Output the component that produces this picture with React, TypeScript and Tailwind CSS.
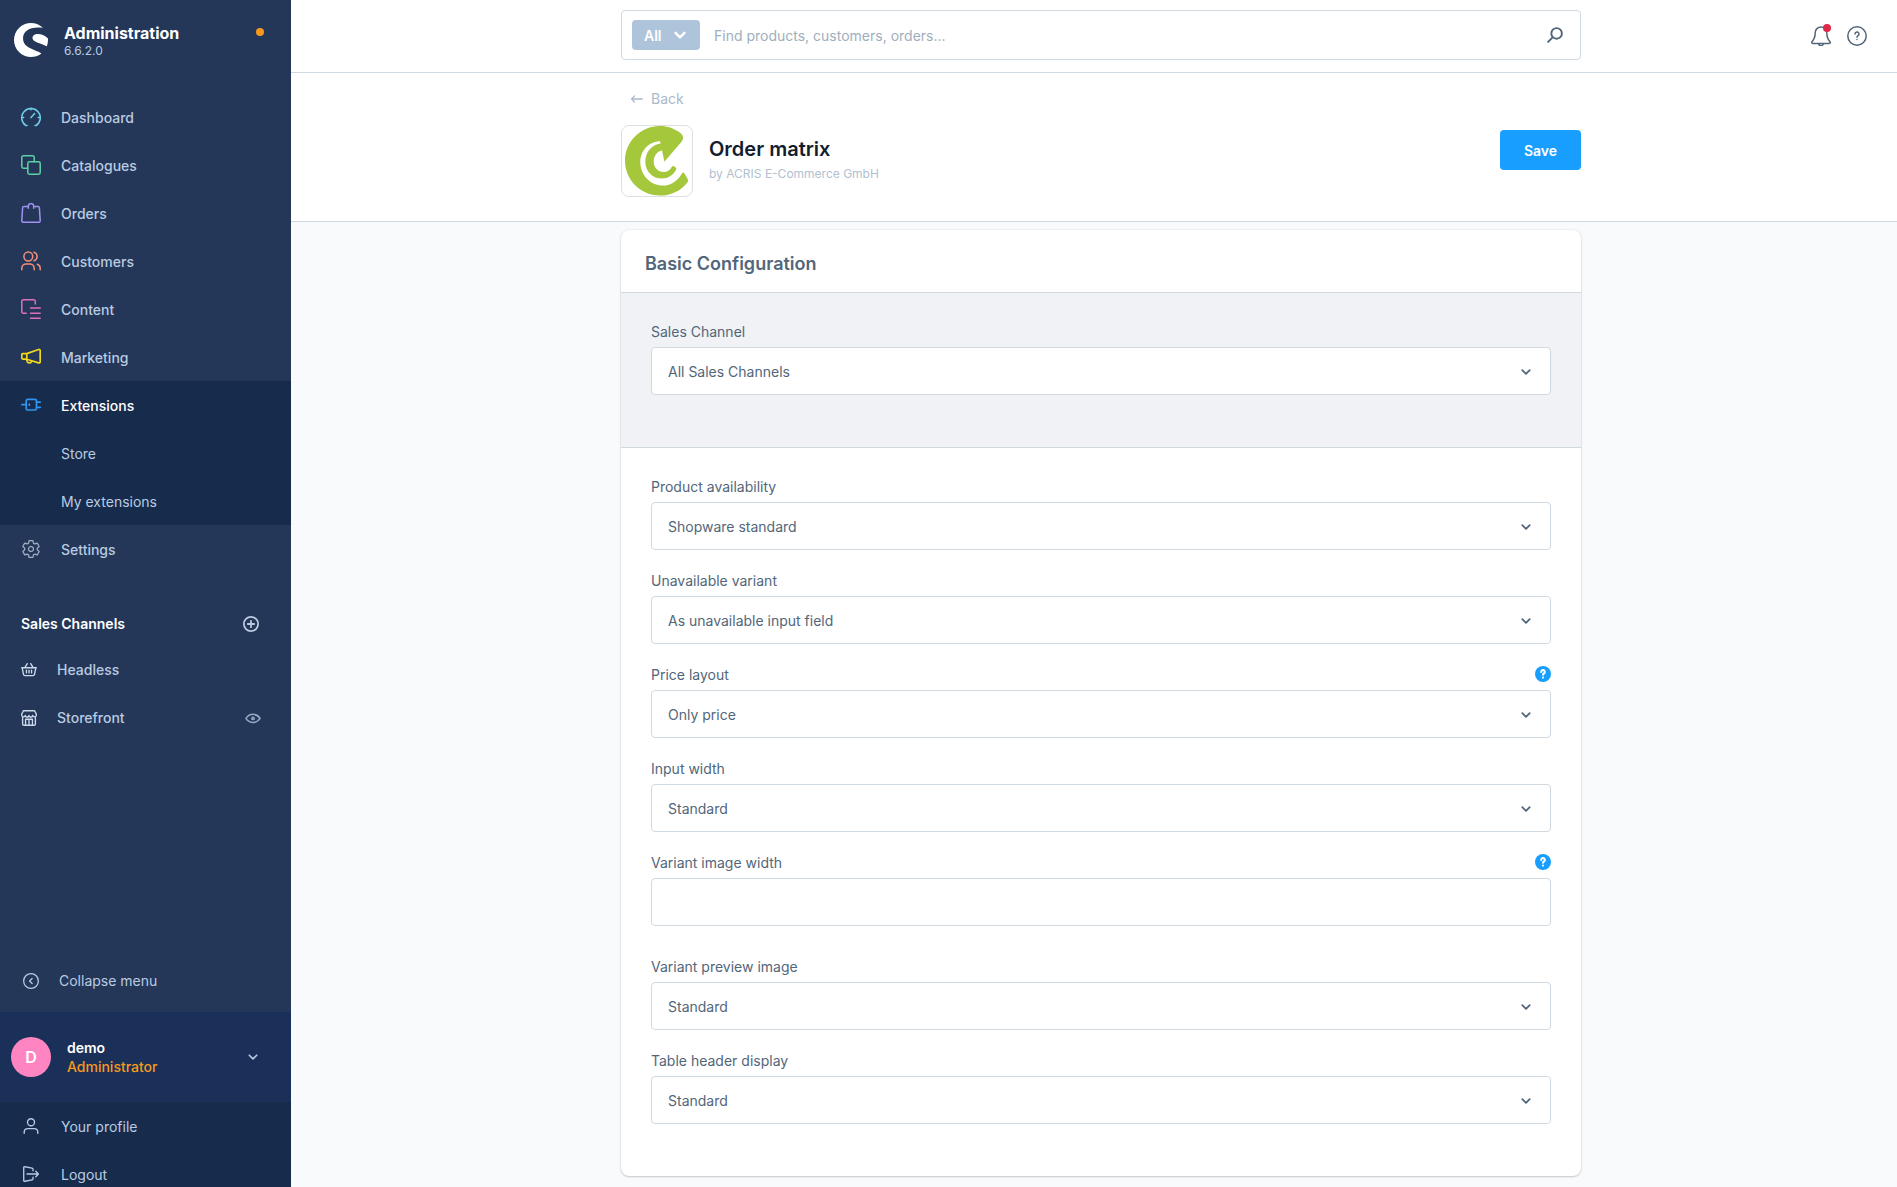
import type { ReactNode } from 'react';
import { IoSettingsOutline } from 'react-icons/io5';
import { SiShopware } from 'react-icons/si';

type IconProps = { children: ReactNode; className?: string; width?: number };

// All outline icons share a 20 unit grid
function Icon({ children, className = 'size-5', width = 1.5 }: IconProps) {
  return (
    <svg
      viewBox="0 0 20 20"
      className={`shrink-0 ${className}`}
      fill="none"
      stroke="currentColor"
      strokeWidth={width}
      strokeLinecap="round"
      strokeLinejoin="round"
      aria-hidden="true"
    >
      {children}
    </svg>
  );
}

function Chevron({ className = '', width = 1.8 }: { className?: string; width?: number }) {
  return (
    <svg viewBox="0 0 10 10" className={className} fill="none" stroke="currentColor" strokeWidth={width} strokeLinecap="round" strokeLinejoin="round" aria-hidden="true">
      <path d="M1.3 3.2 5 6.9l3.7-3.7" />
    </svg>
  );
}

const navItems = [
  {
    label: 'Dashboard',
    icon: (
      <Icon className="size-5 text-[#6ed0e8]">
        <path d="M6 18.6H5A9.3 9.3 0 1 1 15 18.6h-1" />
        <path d="M10 1.2v1.600M.9 10.500h1.800M17.300 10.500h1.800M10 10.600l3.600-4" />
      </Icon>
    ),
  },
  {
    label: 'Catalogues',
    icon: (
      <Icon className="size-5 text-[#5fd0a5]">
        <rect x="6.8" y="6.8" width="12.4" height="12.4" rx="1.6" />
        <path d="M6.8 13.2H2.4A1.6 1.6 0 0 1 .8 11.6V2.4A1.6 1.6 0 0 1 2.4.8h9.200a1.6 1.6 0 0 1 1.6 1.6v4.400" />
      </Icon>
    ),
  },
  {
    label: 'Orders',
    icon: (
      <Icon className="size-5 text-[#a092f0]">
        <path d="M5.3 3.4H3a1.4 1.4 0 0 0-1.4 1.3L.8 17.8a1.4 1.4 0 0 0 1.4 1.5h15.600a1.4 1.4 0 0 0 1.4-1.5l-.8-13.1A1.4 1.4 0 0 0 17 3.4h-2.3" />
        <path d="M7.3 5.200V3.300a2.700 2.700 0 0 1 5.400 0v1.900M7.300 3.400h-2M12.700 3.400h2" />
      </Icon>
    ),
  },
  {
    label: 'Customers',
    icon: (
      <Icon className="size-5 text-[#f0907a]">
        <circle cx="7.3" cy="5.5" r="4.4" />
        <path d="M.8 18.700v-1.600a4.400 4.400 0 0 1 4.400-4.200h3.600a4.400 4.400 0 0 1 4.400 4.200v1.600M13 1.300a4.400 4.400 0 0 1 0 8.400M16.300 13.200a4.300 4.300 0 0 1 2.900 4v1.500" />
      </Icon>
    ),
  },
  {
    label: 'Content',
    icon: (
      <Icon className="size-5 text-[#e06fc4]">
        <path d="M5.300 14.300h-2.900A1.600 1.600 0 0 1 .8 12.700V2.400A1.600 1.600 0 0 1 2.400.8h10.300a1.600 1.600 0 0 1 1.600 1.600v2.600M9.500 9h9.700M9.500 14.200h9.700M9.500 19.200h9.700" />
      </Icon>
    ),
  },
  {
    label: 'Marketing',
    icon: (
      <Icon className="size-5 text-[#f2d71c]" width={1.7}>
        <path d="M5.800 6.600 17.600 2.500a1.200 1.200 0 0 1 1.600 1.100v11.200a1.200 1.200 0 0 1-1.600 1.100L5.800 12.200zM5.800 6.600H2A1.200 1.200 0 0 0 .8 7.800V11A1.200 1.200 0 0 0 2 12.200h3.800M5.800 12.500v1a2.600 2.600 0 0 0 5 .7" />
      </Icon>
    ),
  },
];

const extensionLinks = ['Store', 'My extensions'];

const fields = [
  { id: 'availability', label: 'Product availability', value: 'Shopware standard' },
  { id: 'unavailable', label: 'Unavailable variant', value: 'As unavailable input field' },
  { id: 'price-layout', label: 'Price layout', value: 'Only price', help: true },
  { id: 'input-width', label: 'Input width', value: 'Standard' },
  { id: 'image-width', label: 'Variant image width', help: true },
  { id: 'preview-image', label: 'Variant preview image', value: 'Standard' },
  { id: 'table-header', label: 'Table header display', value: 'Standard' },
];

function Sidebar() {
  return (
    <aside className="flex w-[291px] shrink-0 flex-col bg-[#243758] text-sm text-[#b9cbe2]">
      <div className="flex items-start pt-[23px] pr-[27px] pl-3.5">
        <SiShopware className="size-[34px] text-white" />
        <div className="ml-4 flex-1">
          <div className="text-base leading-5 font-bold text-white">Administration</div>
          <div className="text-xs leading-4">6.6.2.0</div>
        </div>
        <span className="mt-[5px] size-2 rounded-full bg-[#f8981d]" />
      </div>

      <nav className="mt-[34px]">
        {navItems.map((item) => (
          <a key={item.label} href="#" className="flex h-12 items-center gap-5 pl-[21px] font-medium">
            {item.icon}
            <span className="pt-0.5">{item.label}</span>
          </a>
        ))}
        <div className="bg-[#172b4d]">
          <a href="#" className="flex h-12 items-center gap-5 pl-[21px] font-medium text-white">
            <Icon className="size-5 text-[#2f95f0]" width={1.7}>
              <path d="M.8 9.700h4.400M15.500 7.100h3.700M15.500 12.300h3.700M8.300 9.200v1" />
              <rect x="5.2" y="4.4" width="10.3" height="10.6" rx="1.6" />
            </Icon>
            <span className="pt-0.5">Extensions</span>
          </a>
          {extensionLinks.map((label) => (
            <a key={label} href="#" className="flex h-12 items-center pt-0.5 pl-[61px]">
              {label}
            </a>
          ))}
        </div>
        <a href="#" className="flex h-12 items-center gap-5 pl-[21px] font-medium">
          <IoSettingsOutline className="size-5 text-[#9fb0c4]" />
          <span className="pt-0.5">Settings</span>
        </a>
      </nav>

      <div className="mt-7 flex h-[45px] items-center justify-between pr-8 pl-[21px]">
        <h2 className="font-semibold text-white">Sales Channels</h2>
        <button type="button" aria-label="Add sales channel">
          <Icon className="size-4" width={2.200}>
            <circle cx="10" cy="10" r="8.900" />
            <path d="M10 6v8M6 10h8" />
          </Icon>
        </button>
      </div>
      <a href="#" className="flex h-12 items-center gap-5 pl-[21px] font-medium">
        <Icon className="size-4 text-[#cbd9ea]" width={1.7}>
          <path d="M.9 7.2h18.200M1.5 7.2l1.600 8.2a2 2 0 0 0 2 1.600h9.800a2 2 0 0 0 2-1.600l1.600-8.2M4.800 7 7.800 2M15.200 7l-3-5M6.800 10.200v3.400M10 10.200v3.400M13.200 10.200v3.400" />
        </Icon>
        Headless
      </a>
      <div className="flex h-12 items-center pr-[30px] pl-[21px]">
        <a href="#" className="flex flex-1 items-center gap-5 font-medium">
          <Icon className="size-4 text-[#cbd9ea]" width={1.7}>
            <path d="M2 9v8.400a1.700 1.700 0 0 0 1.700 1.700h12.600a1.700 1.700 0 0 0 1.700-1.700V9M3 .9h14l2.100 4.300v1.500a2.300 2.300 0 0 1-4.500 0 2.300 2.300 0 0 1-4.600 0 2.300 2.300 0 0 1-4.600 0 2.300 2.300 0 0 1-4.500 0V5.200zM5.700 19v-7.400h8.600V19M10 11.600V19" />
          </Icon>
          Storefront
        </a>
        <button type="button" aria-label="Open storefront" className="text-[#93a9c2]">
          <Icon className="size-4" width={2}>
            <path d="M1.200 10.500C3.500 7.100 6.400 5.400 10 5.400s6.500 1.700 8.800 5.100c-2.300 3.400-5.200 5.100-8.800 5.100S3.500 13.900 1.200 10.500z" />
            <circle cx="10" cy="10.500" r="1.400" />
          </Icon>
        </button>
      </div>

      <div className="flex-1" />

      <button type="button" className="mb-[7px] flex h-12 items-center gap-5 pl-[23px]">
        <Icon className="size-4" width={1.6}>
          <circle cx="10" cy="10" r="9.2" />
          <path d="M11.400 6.800 8.200 10l3.200 3.200" />
        </Icon>
        Collapse menu
      </button>

      <button type="button" className="flex h-[90px] items-center bg-[#1a3059] pr-[33px] pl-[11px] text-left">
        <span className="flex size-10 items-center justify-center rounded-full bg-[#ff85c2] text-base font-semibold text-white">
          D
        </span>
        <span className="ml-4 flex-1">
          <span className="block leading-[19px] font-semibold text-white">demo</span>
          <span className="block leading-[19px] font-medium text-[#f8981d]">Administrator</span>
        </span>
        <Chevron className="size-2.5" width={1.6} />
      </button>
      <div className="h-[85px] overflow-hidden bg-[#172b4d]">
        <a href="#" className="flex h-12 items-center gap-[22px] pl-[23px]">
          <Icon className="size-4" width={1.7}>
            <circle cx="10" cy="5.300" r="4.400" />
            <path d="M1.500 19.200v-1.700a4.500 4.500 0 0 1 4.500-4.300h8a4.500 4.500 0 0 1 4.500 4.300v1.700" />
          </Icon>
          <span className="pt-0.5">Your profile</span>
        </a>
        <a href="#" className="flex h-12 items-center gap-[22px] pl-[23px]">
          <Icon className="size-4" width={1.7}>
            <path d="M12.500 6V4.200a1.500 1.500 0 0 0-1.200-1.500L2.500.9A1.200 1.200 0 0 0 .9 2.100v15.800a1.200 1.200 0 0 0 1.600 1.200l8.800-1.800a1.500 1.500 0 0 0 1.200-1.500V14M5 10h14.100M16 6.600 19.200 10 16 13.400" />
          </Icon>
          <span className="pt-0.5">Logout</span>
        </a>
      </div>
    </aside>
  );
}

function TopBar() {
  return (
    <header className="relative border-b border-[#d1d9e0] bg-white pt-2.5 pb-3 pl-3.5">
      <div className="mx-auto flex h-[50px] max-w-[960px] items-center rounded border border-[#d1d9e0] pr-[17px] pl-2.5">
        <button type="button" className="flex h-[30px] w-[68px] items-center justify-between rounded bg-[#aec4da] pr-3.5 pl-3 text-sm font-semibold text-white">
          <span className="pt-0.5">All</span>
          <Chevron className="size-3" width={2} />
        </button>
        <input
          type="text"
          aria-label="Search"
          placeholder="Find products, customers, orders..."
          className="ml-3.5 flex-1 bg-transparent pt-0.5 text-sm text-[#52667a] outline-none placeholder:text-[#a0aebc]"
        />
        <button type="button" aria-label="Start search" className="text-[#52667a]">
          <Icon className="size-4" width={2.4}>
            <circle cx="12" cy="8" r="6.600" />
            <path d="M7 13 1.400 18.600" />
          </Icon>
        </button>
      </div>
      <div className="absolute inset-y-0 right-[30px] flex items-center gap-4 text-[#52667a]">
        <button type="button" aria-label="Notifications" className="relative">
          <Icon className="size-5">
            <path d="M10 .9a5.800 5.800 0 0 0-5.800 5.800c0 4-.6 6.200-3 8.700-.9 1-.5 2 .6 2h16.400c1.100 0 1.500-1 .6-2-2.400-2.500-3-4.700-3-8.700A5.800 5.800 0 0 0 10 .9zM7.800 17.600a2.200 2.200 0 0 0 4.400 0" />
          </Icon>
          <span className="absolute -top-0.5 right-0 size-2 rounded-full bg-[#de294c]" />
        </button>
        <button type="button" aria-label="Help">
          <Icon className="size-5">
            <circle cx="10" cy="10" r="9.200" />
            <path d="M8 8a2 2 0 1 1 3 1.700c-.7.400-1 .8-1 1.600M10 13.500v.1" />
          </Icon>
        </button>
      </div>
    </header>
  );
}

function PageHeader() {
  return (
    <div className="border-b border-[#cfd8e0] bg-white pl-3.5">
      <div className="mx-auto max-w-[960px] pt-4 pb-6">
        <a href="#" className="ml-2.5 inline-flex h-5 items-center gap-2 align-top text-sm text-[#a9b9ca]">
          <Icon className="size-3" width={2.2}>
            <path d="M18.800 10H1.200M6 4.800.900 10 6 15.200" />
          </Icon>
          Back
        </a>
        <div className="mt-3 flex">
          <div className="size-[72px] overflow-hidden rounded-lg border border-[#dcdfe4]">
            <svg viewBox="1 1 70 70" className="size-full" fill="#a4c73c" aria-hidden="true">
              <path d="M59.700 8.300C53.800 3.500 46.600 1 38.900 1 19.700 1 4 16.600 4 35.800S19.700 70.600 38.900 70.600c11.400 0 21.400-5.100 27.600-13.400.8-1.100.8-2.300 0-3.500l-3-5.300c-.7-1.100-1.800-1.100-2.500 0-4.300 7.300-11 12.100-18.800 12.100-13.200 0-22.900-10.600-22.900-23.500 0-11.400 8.900-20.600 19.800-20.700l.5 2.200c-8.900 1-15.300 8.700-15.300 18.200 0 9.800 7.500 16.900 16.700 16.900 5.900 0 11.100-3.300 14-8.500.6-1.100.3-1.900-.4-2.500l-1.500-1.300c-.9-.7-1.700-.5-2.400.6-2 3.300-4.400 5.200-8 5.200-5.700 0-10-4.500-10-10.300 0-5.900 3.200-10 8.300-11.500L43.400 36.700 60.700 16.500c1.700-2 1.800-4.500.4-6.700-.4-.6-.9-1.100-1.400-1.500z" />
            </svg>
          </div>
          <div className="ml-4 flex-1 pt-2.5">
            <h1 className="text-xl leading-7 font-semibold text-[#111d2f]">Order matrix</h1>
            <p className="mt-[3px] text-xs leading-4 text-[#b1bfce]">by ACRIS E-Commerce GmbH</p>
          </div>
          <button type="button" className="mt-[5px] h-10 w-[81px] rounded bg-[#189eff] pt-0.5 text-sm font-semibold text-white">
            Save
          </button>
        </div>
      </div>
    </div>
  );
}

type FieldProps = { id: string; label: string; value?: string; help?: boolean };

function Field({ id, label, value, help }: FieldProps) {
  return (
    <div className={value ? 'mb-[22px]' : 'mb-8'}>
      <div className="mb-1.5 flex h-[18px] items-start justify-between">
        <label htmlFor={id} className="text-sm leading-[18px]">
          {label}
        </label>
        {help && (
          <button type="button" aria-label={`Help for ${label}`} className="flex size-4 items-center justify-center rounded-full bg-[#189eff] text-white">
            <Icon className="size-4" width={2.6}>
              <path d="M7.700 7.400a2.300 2.300 0 1 1 3.400 2c-.8.400-1.100.8-1.100 1.600M10 14.300v.2" />
            </Icon>
          </button>
        )}
      </div>
      {value ? (
        <div className="relative">
          <select id={id} className="block h-12 w-full appearance-none rounded border border-[#d1d9e0] bg-white px-4 pt-0.5 text-sm outline-none">
            <option>{value}</option>
          </select>
          <Chevron className="pointer-events-none absolute top-5 right-5 size-2.5" />
        </div>
      ) : (
        <input id={id} type="text" className="block h-12 w-full rounded border border-[#d1d9e0] bg-white px-4 text-sm outline-none" />
      )}
    </div>
  );
}

export default function App() {
  return (
    <div className="flex h-screen overflow-hidden bg-[#f9fafc] font-['Inter',sans-serif] text-[#52667a]">
      <Sidebar />
      <div className="flex min-w-0 flex-1 flex-col">
        <TopBar />
        <PageHeader />
        <main className="min-h-0 flex-1 overflow-hidden pt-2 pl-3.5">
          <div className="mx-auto max-w-[960px] overflow-hidden rounded-lg bg-white shadow-[0_1px_2px_rgba(0,0,0,0.18),0_0_2px_rgba(0,0,0,0.12)]">
            <h2 className="flex h-[63px] items-center border-b border-[#d1d9e0] px-6 pt-1.5 text-lg font-semibold">
              Basic Configuration
            </h2>
            <div className="border-b border-[#d1d9e0] bg-[#f0f2f5] p-[30px]">
              <Field id="sales-channel" label="Sales Channel" value="All Sales Channels" />
            </div>
            <div className="p-[30px]">
              {fields.map((field) => (
                <Field key={field.id} {...field} />
              ))}
            </div>
          </div>
        </main>
      </div>
    </div>
  );
}
